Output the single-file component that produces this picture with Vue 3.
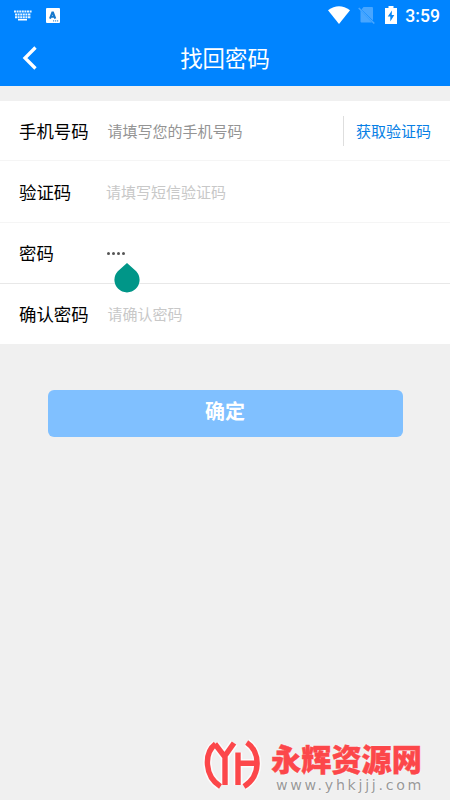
<script setup>
const rows = [
  { label: '手机号码', hint: '请填写您的手机号码', tone: 'dark', action: '获取验证码' },
  { label: '验证码', hint: '请填写短信验证码', tone: 'near' },
  { label: '密码', value: 4 },
  { label: '确认密码', hint: '请确认密码', tone: 'light' }
]
</script>

<template>
  <div class="screen">
    <header class="top">
      <div class="status">
        <svg class="keyboard" width="18" height="11" viewBox="0 0 18 11">
          <path d="M0 1.5H18M1 4.5H17M1 7.2H17" stroke="#e6f4ff" stroke-width="2" stroke-dasharray="2 .6" />
          <path d="M4 9.7H13" stroke="#fff" stroke-width="1.6" />
        </svg>
        <svg class="ime" width="14" height="15" viewBox="0 0 14 15">
          <rect width="14" height="15" rx="1" fill="#fff" />
          <path d="M4 10.7L6.3 4.6H7L9.3 10.7M5 8.7H8.3" fill="none" stroke="#1678cc" stroke-width="2" />
          <path d="M7 12.9H13" stroke="#1678cc" stroke-width="1" stroke-dasharray="1.2 .8" />
        </svg>
        <span class="spacer"></span>
        <svg class="wifi" width="22" height="18" viewBox="0 0 22 18">
          <path d="M0 4.3Q11 -4 22 4.3L11 18Z" fill="#fff" />
        </svg>
        <svg class="sim" width="17" height="18" viewBox="0 0 17 18">
          <path d="M5.5 1H14Q15 1 15 2V14.5L3.5 3.5Z M2.5 4.5L14 16.5H3.5Q2.5 16.5 2.5 15.5Z" fill="#48a6ff" />
          <path d="M.7 2L16.3 17.5" stroke="#48a6ff" stroke-width="1.5" />
        </svg>
        <svg class="battery" width="12" height="18" viewBox="0 0 12 18">
          <path d="M3.5 0H8.5V2H12V18H0V2H3.5Z" fill="#fff" />
          <path d="M7 4.5L2.7 10.5H5.3V15.5L9.3 9H6.7Z" fill="#0787f5" />
        </svg>
        <span class="clock">3:59</span>
      </div>
      <div class="bar">
        <svg class="back" width="16" height="24" viewBox="0 0 16 24">
          <path d="M13.5 1.5L3 12L13.5 22.5" fill="none" stroke="#fff" stroke-width="3.3" />
        </svg>
        <h1>找回密码</h1>
      </div>
    </header>

    <main>
      <section class="form">
        <div v-for="row in rows" :key="row.label" class="row">
          <label>{{ row.label }}</label>
          <div v-if="row.value" class="dots">
            <i v-for="n in row.value" :key="n"></i>
            <svg class="handle" width="26" height="30" viewBox="0 0 26 30">
              <path d="M13 0L22.2 8.2A12.6 12.6 0 1 1 3.8 8.2Z" fill="#009688" />
            </svg>
          </div>
          <span v-else class="hint" :class="row.tone">{{ row.hint }}</span>
          <span v-if="row.action" class="action">{{ row.action }}</span>
        </div>
      </section>
      <button class="submit">确定</button>
    </main>

    <footer class="brand">
      <svg class="mark" width="58" height="54" viewBox="0 0 58 54">
        <path class="halo" d="M12.5 6C1 15 1 38 17.5 48.5M12 6L21.5 18.5L31 5M22 17V47M35 14.5V47M35 25.3H54M43.7 4.5C58 14 58 38 41 48.5" />
        <path d="M12.5 6C1 15 1 38 17.5 48.5M12 6L21.5 18.5L31 5M22 17V47M35 14.5V47M35 25.3H54M43.7 4.5C58 14 58 38 41 48.5" />
      </svg>
      <div class="words">
        <span class="name">永辉资源网</span>
        <span class="site">www.yhkjjj.com</span>
      </div>
    </footer>
  </div>
</template>

<style>
body { margin: 0; background: #f0f0f0; }
</style>

<style scoped>
.screen { width: 450px; height: 800px; overflow: hidden; display: flex; flex-direction: column; background: #f0f0f0; font-family: "Noto Sans CJK SC", sans-serif; }
.top { height: 86px; flex: none; background: #0084ff; }
.status { height: 30px; display: flex; align-items: center; padding: 0 10px 0 14px; }
.ime { margin-left: 14px; }
.spacer { flex: 1; }
.sim { margin-left: 8px; }
.battery { margin-left: 10px; }
.clock { margin-left: 8.5px; padding-top: 1px; font: 500 17.6px/30px Roboto, sans-serif; color: #fff; }
.bar { height: 55px; display: grid; grid-template-columns: 60px 1fr 60px; align-items: center; }
.back { margin-left: 22px; }
h1 { margin: 0; text-align: center; font-size: 22.4px; font-weight: 400; line-height: 55px; color: #fff; }
.form { margin-top: 15px; background: #fff; }
.row { height: 61px; box-sizing: border-box; border-bottom: 1px solid #f5f5f5; display: flex; align-items: center; padding: 0 0 2px 19px; }
.row:first-child { height: 60px; padding-bottom: 0; }
.row:nth-child(2) { height: 62px; padding-bottom: 0; }
.row:nth-child(3) { border-color: #e8e8e8; }
.row:last-child { height: 60px; border: 0; padding-bottom: 1px; }
label { width: 88px; font-size: 17.4px; color: #000; white-space: nowrap; }
.hint { margin-left: -1px; font-size: 15px; white-space: nowrap; }
.dark { color: #949494; padding-left: 1.5px; }
.near { color: #c8c8c8; }
.light { color: #c8c8c8; padding-left: 1.5px; }
.action { margin-left: auto; width: 107px; height: 30px; box-sizing: border-box; padding-left: 12px; border-left: 1px solid #dedede; font-size: 15px; line-height: 29px; color: #087fe5; white-space: nowrap; }
.dots { position: relative; display: flex; gap: 2px; padding-top: 2px; }
.dots i { width: 3px; height: 3px; border-radius: 50%; background: #555; }
.handle { position: absolute; left: 7px; top: 13px; z-index: 2; }
.submit { display: block; width: 355px; height: 47px; margin: 46px 0 0 47.5px; padding: 0 0 5px; border: 0; border-radius: 6px; background: #80c0ff; color: #fff; font: 700 20px/42px "Noto Sans CJK SC", sans-serif; }
.brand { margin-top: auto; height: 62px; display: flex; padding-left: 203px; }
.mark { flex: none; overflow: visible; fill: none; stroke: #fc474a; stroke-width: 5.4; }
.halo { stroke: #fff; stroke-width: 8.5; stroke-opacity: .75; }
.words { margin-left: 10px; display: flex; flex-direction: column; }
.name { font-size: 30.2px; font-weight: 900; line-height: 40px; color: #fc474a; -webkit-text-stroke: .4px #fc474a; text-shadow: 0 0 2px #fff; white-space: nowrap; }
.site { margin-left: 5px; font: 14.2px/14px "DejaVu Sans", sans-serif; letter-spacing: 2.7px; color: #999; text-shadow: 0 0 2px #fff; white-space: nowrap; }
</style>
